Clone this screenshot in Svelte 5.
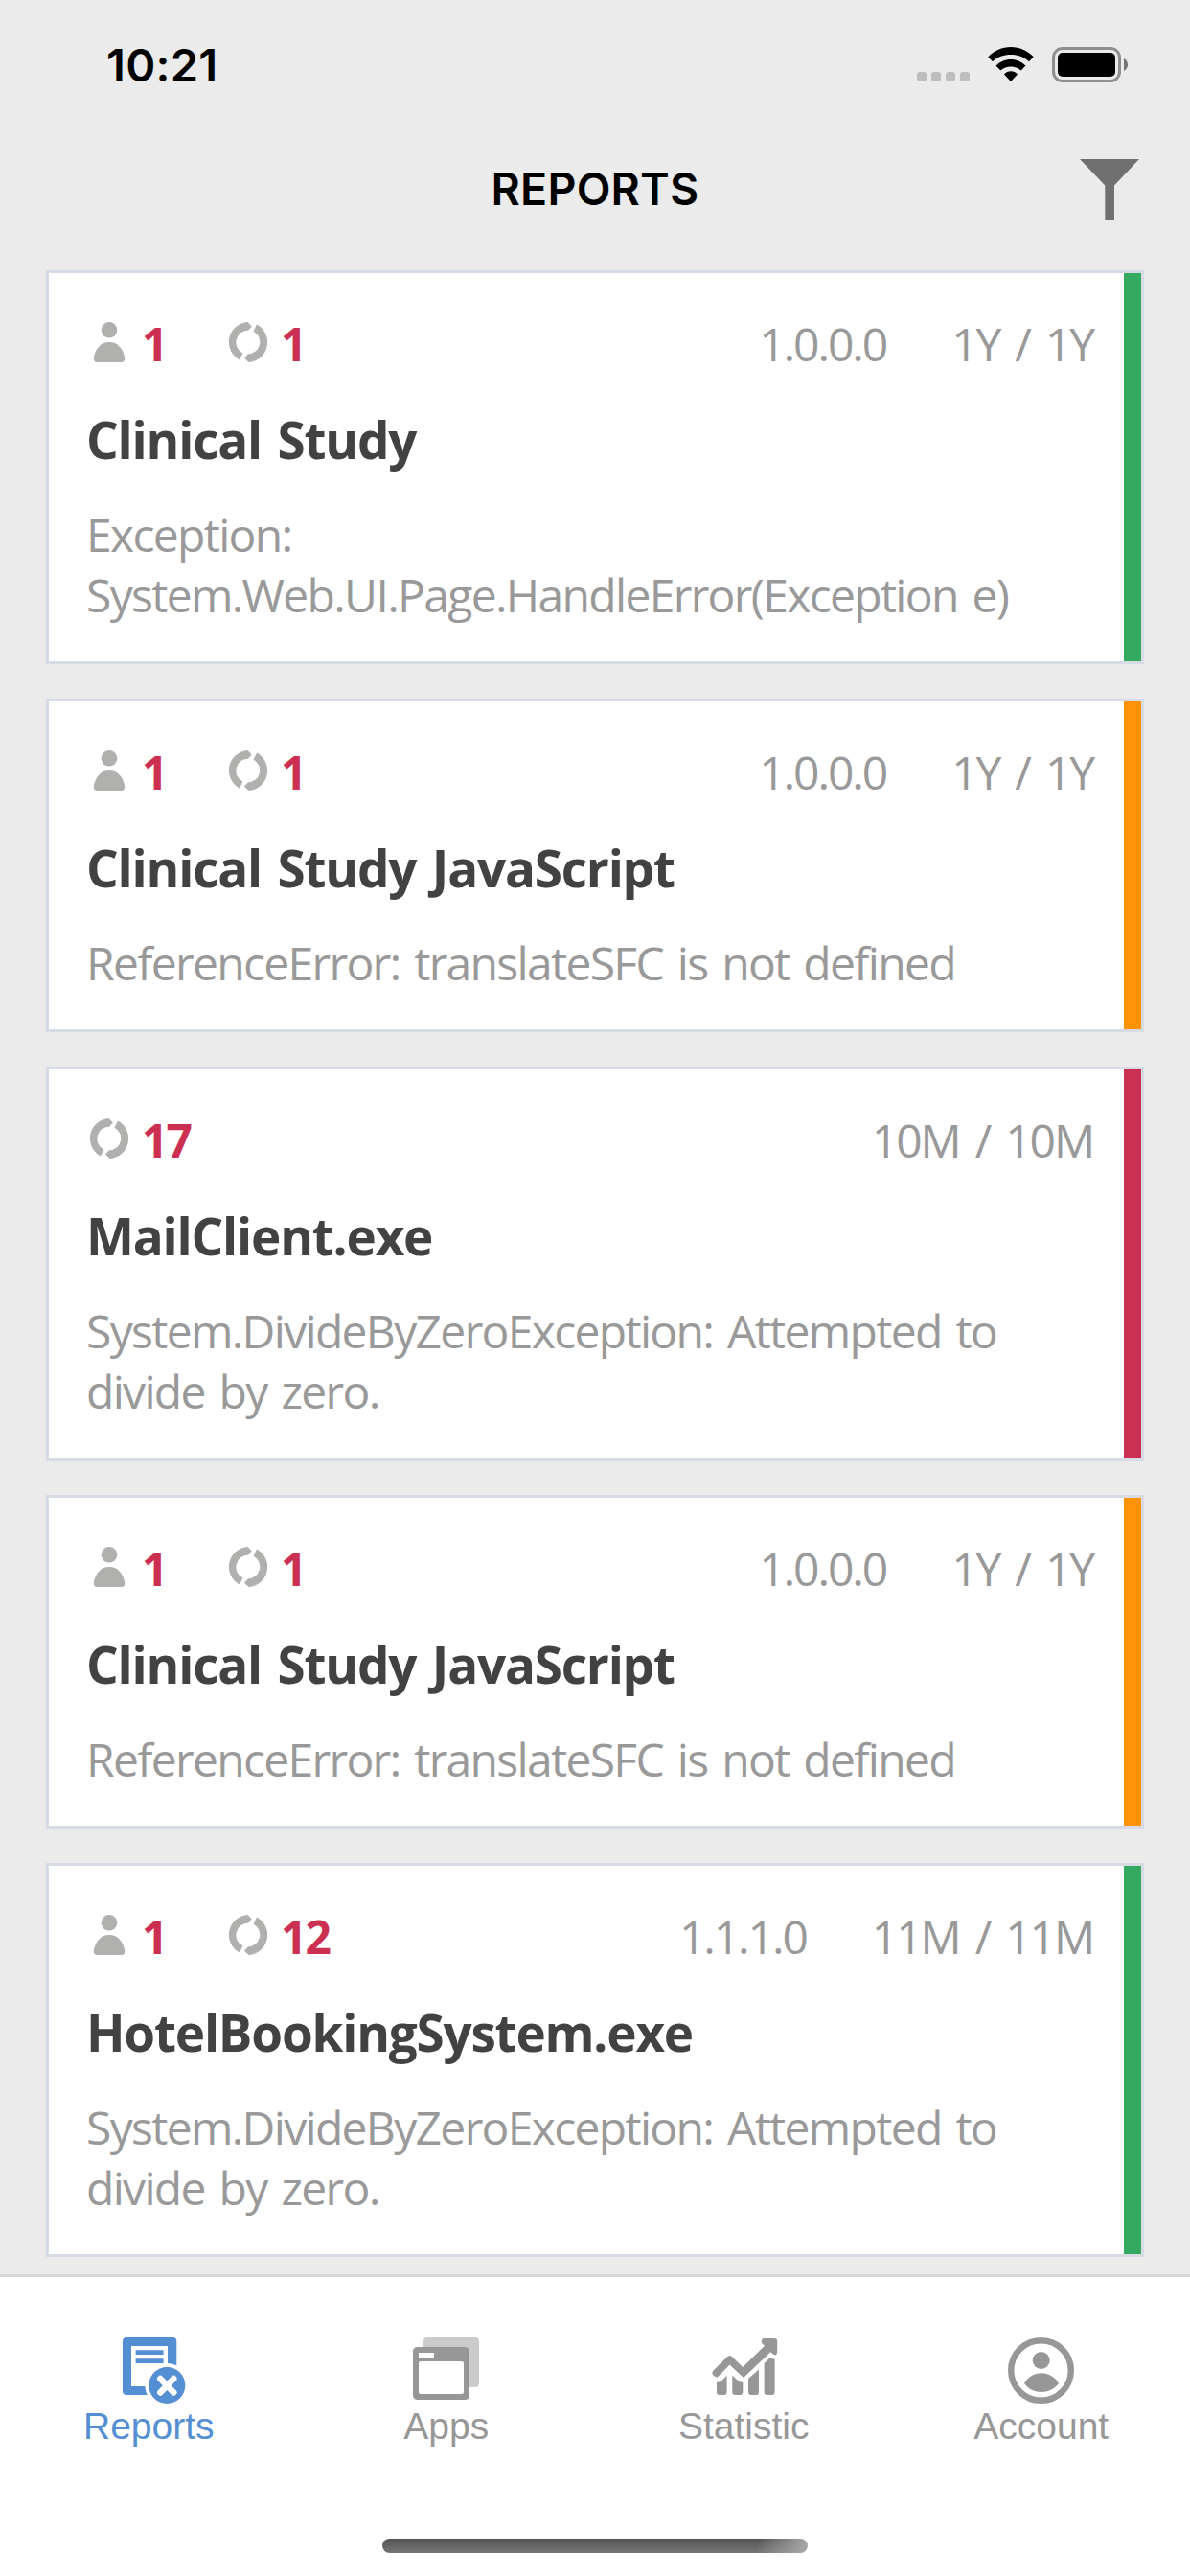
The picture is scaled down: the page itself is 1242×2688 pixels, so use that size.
<script lang="ts">
  type Level = 'low' | 'medium' | 'high';

  interface Report {
    users?: number;
    count: number;
    version?: string;
    age: string;
    title: string;
    message: string;
    level: Level;
  }

  let reports: Report[] = [
    {
      users: 1,
      count: 1,
      version: '1.0.0.0',
      age: '1Y / 1Y',
      title: 'Clinical Study',
      message: 'Exception: System.Web.UI.Page.HandleError(Exception e)',
      level: 'low'
    },
    {
      users: 1,
      count: 1,
      version: '1.0.0.0',
      age: '1Y / 1Y',
      title: 'Clinical Study JavaScript',
      message: 'ReferenceError: translateSFC is not defined',
      level: 'medium'
    },
    {
      count: 17,
      age: '10M / 10M',
      title: 'MailClient.exe',
      message: 'System.DivideByZeroException: Attempted to divide by zero.',
      level: 'high'
    },
    {
      users: 1,
      count: 1,
      version: '1.0.0.0',
      age: '1Y / 1Y',
      title: 'Clinical Study JavaScript',
      message: 'ReferenceError: translateSFC is not defined',
      level: 'medium'
    },
    {
      users: 1,
      count: 12,
      version: '1.1.1.0',
      age: '11M / 11M',
      title: 'HotelBookingSystem.exe',
      message: 'System.DivideByZeroException: Attempted to divide by zero.',
      level: 'low'
    }
  ];

  const tabs = ['Reports', 'Apps', 'Statistic', 'Account'];
  let activeTab = $state('Reports');
</script>

<div class="screen">
  <div class="status-bar">
    <span class="time">10:21</span>
    <div class="indicators">
      <svg class="signal" viewBox="0 0 55 10">
        <rect width="10" height="10" rx="3" />
        <rect x="15" width="10" height="10" rx="3" />
        <rect x="30" width="10" height="10" rx="3" />
        <rect x="45" width="10" height="10" rx="3" />
      </svg>
      <svg class="wifi" viewBox="0 0 48 36">
        <path d="M24 0C33 0 41.500 3.700 47.700 10.300L43 15.200C38 10.500 31.500 8 24 8S10 10.500 5 15.200L.3 10.300C6.500 3.700 15 0 24 0Z" />
        <path d="M24 13C30 13 35.500 15.500 39.500 19.600L34.700 24.500C31.500 21.800 28 20.500 24 20.500S16.500 21.800 13.300 24.500L8.500 19.600C12.500 15.500 18 13 24 13Z" />
        <path d="M24 25.300C26.700 25.300 29 26.400 31 28.500L24 36L17 28.500C19 26.400 21.300 25.300 24 25.300Z" />
      </svg>
      <svg class="battery" viewBox="0 0 79 37">
        <rect x="1.500" y="1.500" width="69" height="34" rx="9.500" fill="none" stroke="#8f8f8f" stroke-width="3" />
        <rect x="6" y="6" width="60" height="25" rx="5" />
        <path d="M75 12Q79 14.500 79 18.500T75 25Z" fill="#757575" />
      </svg>
    </div>
  </div>

  <header>
    <h1>REPORTS</h1>
    <button class="filter" aria-label="Filter">
      <svg viewBox="0 0 62 64">
        <path d="M0 0H62L36 27.500V64H26.300V27.500Z" />
      </svg>
    </button>
  </header>

  <main>
    {#each reports as report}
      <article class="card {report.level}">
        <div class="meta">
          {#if report.users}
            <div class="stat">
              <svg viewBox="0 0 42 42">
                <circle cx="21" cy="8.300" r="8.300" />
                <path d="M21 21C29.500 21 34.500 27 37 36Q38 42 33.500 42H8.500Q4 42 5 36C7.500 27 12.500 21 21 21Z" />
              </svg>
              <span>{report.users}</span>
            </div>
          {/if}
          <div class="stat">
            <svg viewBox="0 0 42 42">
              <path d="M20.500 0L24.800 4.500L21 8.700A12.500 12.500 0 0 0 15.500 32.500L12 39.500A21 21 0 0 1 20.500 0Z" />
              <path d="M30 2.500A21 21 0 0 1 21.500 42L17 37.500L21 33.300A12.500 12.500 0 0 0 26.500 9.700Z" />
            </svg>
            <span>{report.count}</span>
          </div>
          <div class="details">
            {#if report.version}
              <span>{report.version}</span>
            {/if}
            <span>{report.age}</span>
          </div>
        </div>
        <h2>{report.title}</h2>
        <p>{report.message}</p>
      </article>
    {/each}
  </main>

  <nav>
    <div class="tabs">
      {#each tabs as tab}
        <button class="tab" class:active={activeTab === tab} onclick={() => (activeTab = tab)}>
          <svg viewBox="0 0 69 69">
            {#if tab === 'Reports'}
              <path fill-rule="evenodd" d="M11 0H59.300Q63.300 0 63.300 4V56Q63.300 60 59.300 60H11Q7 60 7 56V4Q7 0 11 0ZM16 9V51H54V9Z" />
              <path d="M20.600 13.300H49.600V18H20.600ZM20.600 22.300H49.600V27H20.600Z" />
              <circle cx="53.300" cy="50" r="23" fill="#fff" />
              <circle cx="53.300" cy="50" r="19" />
              <path d="M46.300 43L60.300 57.500M60.300 43L46.300 57.500" stroke="#fff" stroke-width="6.500" stroke-linecap="round" />
            {:else if tab === 'Apps'}
              <path opacity=".5" d="M15 0H65Q69 0 69 4V48Q69 52 65 52H59V16Q59 10 53 10H11V4Q11 0 15 0Z" />
              <path fill-rule="evenodd" d="M5 10H54Q59 10 59 15V60Q59 65 54 65H5Q0 65 0 60V15Q0 10 5 10ZM6 16V21H22V16ZM8 25Q6 25 6 27V57Q6 59 8 59H51Q53 59 53 57V27Q53 25 51 25Z" />
            {:else if tab === 'Statistic'}
              <path d="M2.500 34.500L17.600 19.800Q19.600 18 21.600 19.800L33.200 31L56 8.700L53 5.700Q52 1 56 1H66Q69.200 1 69.200 4V15Q69 19 66 18.300L62.300 15.300L34 42L19.600 28.500L6.600 41.700Q.5 40 1.500 36Z" />
              <path d="M6 46.500Q9 47.500 12 44.500L16.600 39.500V57Q16.600 60 13.600 60H9Q6 60 6 57ZM22.300 39.500L27 44Q30 47.500 33.300 46.500V57Q33.300 60 30.300 60H25.300Q22.300 60 22.300 57ZM39 43L50 33.500V57Q50 60 47 60H42Q39 60 39 57ZM55.600 27L61.500 21.500L66.600 22.700V57Q66.600 60 63.600 60H58.600Q55.600 60 55.600 57Z" />
            {:else}
              <circle cx="34.500" cy="34.500" r="31.300" fill="none" stroke="currentColor" stroke-width="6.400" />
              <circle cx="34.700" cy="24" r="9" />
              <path d="M17 48C25 33.500 44.500 33.500 53 48C44 60 25.500 60 17 48Z" />
            {/if}
          </svg>
          <span>{tab}</span>
        </button>
      {/each}
    </div>
    <div class="home-indicator"></div>
  </nav>
</div>

<style>
  :global(body) {
    background: #ebebeb;
  }

  .screen {
    width: 1242px;
    height: 2688px;
    display: flex;
    flex-direction: column;
    overflow: hidden;
    background: #ebebeb;
    font-family: 'Open Sans', 'Noto Sans', sans-serif;
  }

  .status-bar {
    height: 132px;
    flex: none;
    display: flex;
    justify-content: space-between;
    padding: 0 65px 0 111px;
    box-sizing: border-box;
  }

  .time {
    padding-top: 38px;
    font: 600 47px/60px Inter, sans-serif;
    letter-spacing: 0.3px;
  }

  .indicators {
    display: flex;
    align-items: flex-start;
    padding-top: 49px;
  }

  .signal {
    width: 55px;
    height: 10px;
    margin: 26px 19px 0 0;
    fill: #bebebe;
  }

  .wifi {
    width: 48px;
    height: 36px;
    margin-right: 19px;
  }

  .battery {
    width: 79px;
    height: 37px;
  }

  header {
    height: 150px;
    flex: none;
    display: grid;
    grid-template-columns: 1fr auto 1fr;
    padding: 0 53px;
  }

  h1 {
    grid-column: 2;
    margin: 35px 0 0;
    font: 600 46.500px/60px Inter, sans-serif;
    letter-spacing: 0.2px;
  }

  button {
    border: 0;
    padding: 0;
    background: none;
    cursor: pointer;
  }

  .filter {
    justify-self: end;
    align-self: start;
    width: 62px;
    height: 64px;
    margin-top: 34px;
  }

  .filter svg {
    display: block;
    fill: #707070;
  }

  main {
    flex: 1;
    min-height: 0;
    overflow: hidden;
    display: flex;
    flex-direction: column;
    gap: 36px;
    padding: 0 48px;
  }

  .card {
    --level: #34aa61;
    flex: none;
    background: linear-gradient(var(--level), var(--level)) right / 18px 100% no-repeat #fff;
    border: 3px solid #d6dbe5;
    padding: 41px 50px 38px 39px;
  }

  .card.medium {
    --level: #ff9307;
  }

  .card.high {
    --level: #cb3052;
  }

  .meta {
    height: 66px;
    display: flex;
    font-size: 48px;
    line-height: 66px;
  }

  .stat {
    display: flex;
    gap: 13px;
    margin-left: 3px;
    margin-right: 61.500px;
    color: #cb3052;
    font-weight: 700;
    letter-spacing: -2px;
  }

  .stat svg {
    width: 42px;
    height: 42px;
    margin-top: 10px;
    fill: #b0b0ae;
  }

  .details {
    display: flex;
    gap: 68px;
    margin-left: auto;
    color: #999;
    letter-spacing: -2.100px;
    word-spacing: 5.700px;
  }

  h2 {
    margin: 31px 0 0;
    color: #424242;
    font-size: 53px;
    font-weight: 700;
    line-height: 72px;
    letter-spacing: -1.200px;
    word-spacing: 4px;
    white-space: nowrap;
  }

  p {
    margin: 31px 0 0;
    color: #999;
    font-size: 48px;
    line-height: 63px;
    letter-spacing: -1.680px;
    word-spacing: 4px;
  }

  nav {
    height: 312px;
    flex: none;
    border-top: 3px solid #d8d8d8;
    background: #fff;
  }

  .tabs {
    height: 273px;
    display: grid;
    grid-template-columns: repeat(4, 1fr);
  }

  .tab {
    display: flex;
    flex-direction: column;
    align-items: center;
    padding-top: 63px;
    color: #979797;
    font: 39px/44px 'Liberation Sans', Arial, sans-serif;
  }

  .tab.active {
    color: #548fd3;
  }

  .tab svg {
    width: 69px;
    height: 69px;
    overflow: visible;
    fill: currentColor;
  }

  .tab span {
    margin-top: 2px;
  }

  .home-indicator {
    width: 444px;
    height: 15px;
    margin: 0 auto;
    border-radius: 8px;
    background: linear-gradient(100deg, transparent 88%, #aaa 100%), linear-gradient(#555, #757575);
  }
</style>
